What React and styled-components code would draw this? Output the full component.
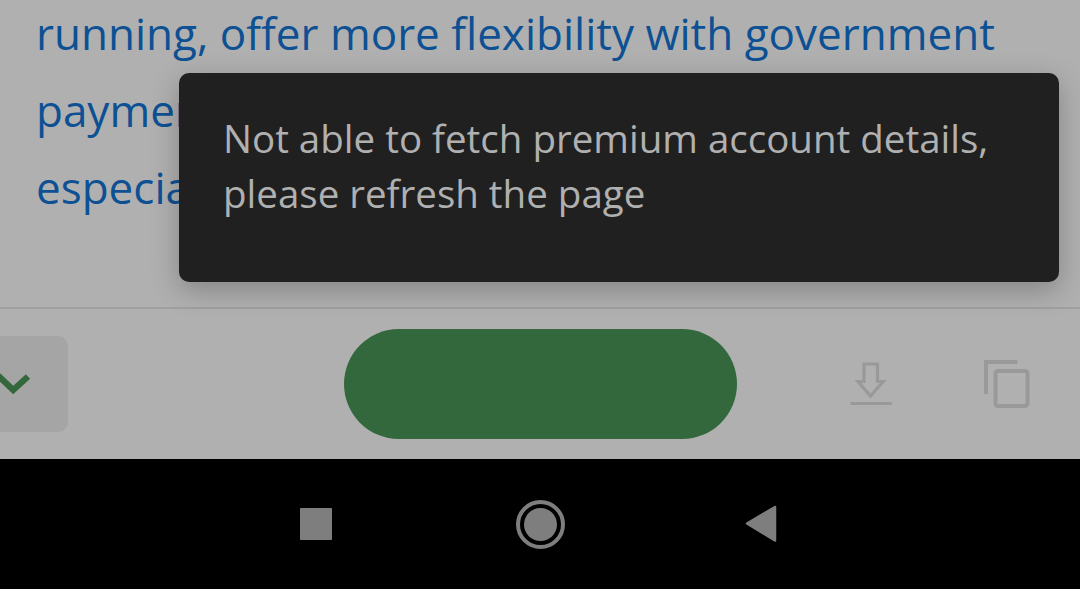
import styled, { createGlobalStyle } from 'styled-components';

const GlobalStyle = createGlobalStyle`
  * {
    box-sizing: border-box;
  }
  body {
    margin: 0;
    background: #000;
    font-family: 'Open Sans', 'Noto Sans', sans-serif;
  }
`;

const Screen = styled.div`
  position: relative;
  display: flex;
  flex-direction: column;
  width: 1080px;
  height: 589px;
  overflow: hidden;
`;

const Article = styled.main`
  height: 307px;
  padding: 0 36px;
  overflow: hidden;
  background: #b0b0b0;
`;

const Paragraph = styled.p`
  margin: -5px 0 0;
  color: #0d5093;
  font-size: 44px;
  line-height: 77px;
  white-space: nowrap;

  span {
    display: block;
  }
`;

const Toast = styled.div`
  position: absolute;
  top: 72.5px;
  left: 179px;
  width: 880px;
  height: 209px;
  padding: 38.5px 44px;
  border-radius: 10px;
  background: #202020;
  box-shadow: 0 8px 28px rgba(0, 0, 0, 0.25);
  color: #b0b0b0;
  font-size: 38.5px;
  line-height: 55px;
  white-space: nowrap;

  span {
    display: block;
  }
`;

const ActionBar = styled.footer`
  display: flex;
  align-items: center;
  height: 152px;
  border-top: 2px solid #a0a0a0;
  background: #b0b0b0;
`;

const Collapse = styled.button`
  flex-shrink: 0;
  width: 68px;
  height: 96px;
  margin-right: 276px;
  padding: 0;
  border: 0;
  border-radius: 0 10px 10px 0;
  background: #a5a5a5;

  svg {
    display: block;
  }
`;

const Submit = styled.button`
  flex-shrink: 0;
  width: 393px;
  height: 110px;
  margin: 0 113px 1px 0;
  border: 0;
  border-radius: 55px;
  background: #33673c;
`;

const IconButton = styled.button`
  display: flex;
  flex-shrink: 0;
  width: ${(props) => props.$width}px;
  height: 50px;
  padding: 0;
  border: 0;
  background: none;
  color: #999;

  & + & {
    margin-left: 91px;
  }
`;

const NavBar = styled.nav`
  display: flex;
  align-items: center;
  height: 130px;
  padding-left: 300px;
  background: #000;
  color: #7e7e7e;

  svg {
    display: block;
  }
`;

const Square = styled.span`
  width: 32px;
  height: 32px;
  margin-right: 184px;
  border-radius: 1px;
  background: currentColor;
`;

const Home = styled.span`
  width: 49px;
  height: 49px;
  margin-right: 180px;
  padding: 4px;
  border: 4px solid currentColor;
  border-radius: 50%;
  background: currentColor content-box;
`;

const App = () => {
  return (
    <Screen>
      <GlobalStyle />
      <Article>
        <Paragraph>
          <span>running, offer more flexibility with government</span>
          <span>payments</span>
          <span>especially</span>
        </Paragraph>
      </Article>
      <ActionBar>
        <Collapse aria-label="Collapse">
          <svg width="68" height="96" fill="none" stroke="#33673c">
            <path d="M-2 39.5L13.2 54L28 40.5" strokeWidth="6.2" />
          </svg>
        </Collapse>
        <Submit aria-label="Submit" />
        <IconButton $width={42} aria-label="Download">
          <svg width="42" height="50" fill="none" stroke="currentColor">
            <path
              d="M14 5H27.5V22.5H33L20.5 37L8 22.5H14Z"
              strokeWidth="3.2"
            />
            <path d="M0.5 44.5H42" strokeWidth="3.2" />
          </svg>
        </IconButton>
        <IconButton $width={48} aria-label="Copy">
          <svg width="48" height="50" fill="none" stroke="currentColor">
            <path d="M3 35V3H34.5" strokeWidth="4" />
            <rect
              x="12.5"
              y="12"
              width="32"
              height="35"
              rx="2.5"
              strokeWidth="4"
            />
          </svg>
        </IconButton>
      </ActionBar>
      <NavBar>
        <Square />
        <Home />
        <svg width="32" height="38" fill="currentColor" stroke="currentColor">
          <path
            d="M2 18.5L30 2V35.5Z"
            strokeWidth="2.5"
            strokeLinejoin="round"
          />
        </svg>
      </NavBar>
      <Toast role="alert">
        <span>Not able to fetch premium account details,</span>
        <span>please refresh the page</span>
      </Toast>
    </Screen>
  );
};

export default App;
